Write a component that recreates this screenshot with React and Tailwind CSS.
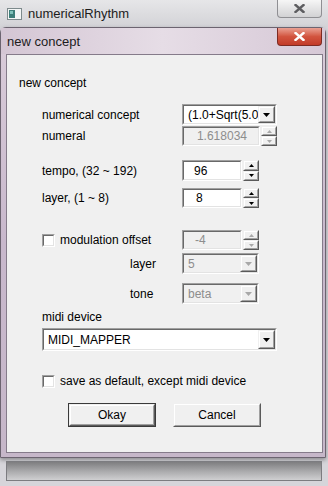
import React from 'react';

const Tri = ({ up, w = 7, h = 4, color = '#000' }) => (
  <svg width={w} height={h} viewBox={`0 0 ${w} ${h}`}>
    {up ? (
      <path d={`M${w / 2} 0 L${w} ${h} L0 ${h} Z`} fill={color} />
    ) : (
      <path d={`M0 0 L${w} 0 L${w / 2} ${h} Z`} fill={color} />
    )}
  </svg>
);

const XGlyph = ({ color }) => (
  <svg width="11" height="9" viewBox="0 0 11 9">
    <path d="M1.5 1 L9.5 8 M9.5 1 L1.5 8" stroke={color} strokeWidth="2.4" strokeLinecap="square" />
  </svg>
);

const AppIcon = () => (
  <svg width="15" height="12" viewBox="0 0 15 12">
    <rect x="0.5" y="0.5" width="14" height="11" fill="#f4f6f6" stroke="#7d8a8c" />
    <rect x="2" y="2" width="6" height="8" fill="#3d7f7a" />
    <rect x="3" y="3" width="3" height="3" fill="#7fc2bb" />
  </svg>
);

// classic 2px sunken edge
const Sunken = ({ className = '', disabled, children }) => (
  <div className={`border border-t-[#a0a0a0] border-l-[#a0a0a0] border-r-white border-b-white ${className}`}>
    <div
      className={`flex h-full w-full items-center border border-t-[#696969] border-l-[#696969] border-r-[#e3e3e3] border-b-[#e3e3e3] ${
        disabled ? 'bg-[#f0f0f0] text-[#8d8d8d]' : 'bg-white text-black'
      }`}
    >
      {children}
    </div>
  </div>
);

const Raised = ({ className = '', children }) => (
  <div className={`border border-t-[#f0f0f0] border-l-[#f0f0f0] border-r-[#5a5a5a] border-b-[#5a5a5a] ${className}`}>
    <div className="flex h-full w-full items-center justify-center border border-t-white border-l-white border-r-[#a0a0a0] border-b-[#a0a0a0] bg-[#f0f0f0]">
      {children}
    </div>
  </div>
);

const Spin = ({ disabled, className = '' }) => {
  const c = disabled ? '#a8a8a8' : '#000';
  return (
    <div className={`flex w-[16px] flex-col ${className}`}>
      <Raised className="flex-1">
        <Tri up w={5} h={3} color={c} />
      </Raised>
      <Raised className="flex-1">
        <Tri w={5} h={3} color={c} />
      </Raised>
    </div>
  );
};

const Combo = ({ value, className = '', disabled }) => (
  <Sunken className={className} disabled={disabled}>
    <span className="flex-1 whitespace-nowrap pl-[4px]">{value}</span>
    <Raised className="h-full w-[17px]">
      <Tri color={disabled ? '#a8a8a8' : '#000'} />
    </Raised>
  </Sunken>
);

const Check = () => <Sunken className="h-[13px] w-[13px]" />;

const Label = ({ className = '', children }) => (
  <span className={`leading-[14px] ${className}`}>{children}</span>
);

export default function App() {
  return (
    <div className="h-[486px] w-[328px] overflow-hidden bg-[#d6d5da] text-[12px] text-black [font-family:'Liberation_Sans',Arial,sans-serif]">
      {/* owner window title bar */}
      <div className="flex h-[27px] items-start bg-gradient-to-b from-[#e6e6e8] to-[#d3d3d7]">
        <div className="flex h-[27px] items-center pl-[7px]">
          <AppIcon />
          <span className="ml-[6px] text-[13px] text-[#1c1c1c]">numericalRhythm</span>
        </div>
        <div className="ml-auto mr-[6px] flex h-[18px] w-[45px] items-center justify-center rounded-b-[4px] border border-t-0 border-[#8f8f93] bg-gradient-to-b from-[#f6f6f6] to-[#d2d2d4]">
          <XGlyph color="#5d5d60" />
        </div>
      </div>

      {/* dialog */}
      <div className="flex h-[431px] w-[326px] flex-col rounded-t-[6px] border border-[#6c6470] bg-gradient-to-b from-[#dacdda] via-[#c8b8cc] to-[#c6b7c9] shadow-[0_2px_4px_rgba(0,0,0,0.35)]">
        <div className="flex h-[26px] items-start bg-gradient-to-r from-[#d4c6d4] via-[#e6dde6] to-[#d6c8d6]">
          <span className="pl-[6px] pt-[6px] text-[13px] leading-[15px] text-[#1c1c1c]">new concept</span>
          <div className="ml-auto mr-[3px] flex h-[18px] w-[45px] items-center justify-center rounded-b-[4px] border border-t-0 border-[#7d2a22] bg-gradient-to-b from-[#e9a093] via-[#d2543f] to-[#c23a28]">
            <XGlyph color="#ffffff" />
          </div>
        </div>

        <div className="ml-[5px] flex h-[399px] w-[317px] flex-col border border-[#857b8a] bg-[#f0f0f0]">
          <Label className="ml-[12px] mt-[21px]">new concept</Label>

          <div className="mt-[14px] flex h-[21px] items-center pl-[35px]">
            <Label className="w-[140px]">numerical concept</Label>
            <Combo className="h-[21px] w-[95px]" value="(1.0+Sqrt(5.0" />
          </div>

          <div className="mt-[1px] flex h-[20px] items-center pl-[35px]">
            <Label className="w-[140px]">numeral</Label>
            <Sunken className="h-[20px] w-[78px]" disabled>
              <span className="flex-1 pr-[11px] text-right">1.618034</span>
            </Sunken>
            <Spin disabled className="ml-[1px] h-[20px]" />
          </div>

          <div className="mt-[14px] flex h-[21px] items-center pl-[35px]">
            <Label className="w-[140px]">tempo, (32 ~ 192)</Label>
            <Sunken className="h-[21px] w-[60px]">
              <span className="pl-[10px]">96</span>
            </Sunken>
            <Spin className="ml-[1px] h-[21px]" />
          </div>

          <div className="mt-[7px] flex h-[20px] items-center pl-[35px]">
            <Label className="w-[140px]">layer, (1 ~ 8)</Label>
            <Sunken className="h-[20px] w-[60px]">
              <span className="pl-[12px]">8</span>
            </Sunken>
            <Spin className="ml-[1px] h-[20px]" />
          </div>

          <div className="mt-[22px] flex h-[20px] items-center pl-[35px]">
            <div className="flex w-[140px] items-center">
              <Check />
              <Label className="ml-[5px]">modulation offset</Label>
            </div>
            <Sunken className="h-[20px] w-[60px]" disabled>
              <span className="pl-[11px]">-4</span>
            </Sunken>
            <Spin disabled className="ml-[1px] h-[20px]" />
          </div>

          <div className="mt-[3px] flex h-[21px] items-center pl-[123px]">
            <Label className="w-[52px]">layer</Label>
            <Combo className="h-[21px] w-[77px]" value="5" disabled />
          </div>

          <div className="mt-[9px] flex h-[21px] items-center pl-[123px]">
            <Label className="w-[52px]">tone</Label>
            <Combo className="h-[21px] w-[77px]" value="beta" disabled />
          </div>

          <Label className="ml-[35px] mt-[6px]">midi device</Label>

          <div className="mt-[4px] pl-[35px]">
            <Combo className="h-[23px] w-[235px]" value="MIDI_MAPPER" />
          </div>

          <div className="mt-[23px] flex h-[14px] items-center pl-[35px]">
            <Check />
            <Label className="ml-[5px]">save as default, except midi device</Label>
          </div>

          <div className="mt-[15px] flex pl-[61px]">
            <div className="h-[24px] w-[88px] border border-[#3a3a3a]">
              <Raised className="h-full w-full">Okay</Raised>
            </div>
            <Raised className="ml-[17px] h-[24px] w-[88px]">Cancel</Raised>
          </div>
        </div>
      </div>

      {/* owner window client area below the dialog */}
      <div className="px-[6px] pt-[3px]">
        <div className="h-[20px] border border-[#7c7c80] bg-gradient-to-b from-[#7e7e80] via-[#a9a9ab] to-[#cfcfd1]" />
      </div>
    </div>
  );
}
